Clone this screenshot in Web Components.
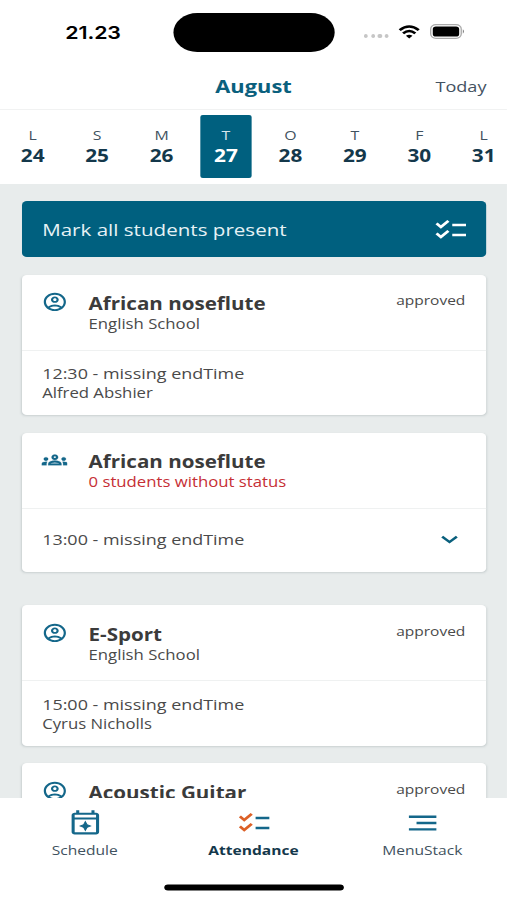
<!DOCTYPE html>
<html lang="en">
<head>
<meta charset="utf-8">
<title>Attendance</title>
<style>
html,body{margin:0;padding:0;background:#fff;overflow:hidden;width:507px;height:900px}
</style>
</head>
<body>
<attendance-app></attendance-app>
<script>
const ICONS = {
  person: '<path d="M12 2C6.48 2 2 6.48 2 12s4.48 10 10 10 10-4.48 10-10S17.52 2 12 2zM7.35 18.5C8.66 17.56 10.26 17 12 17s3.34.56 4.65 1.5c-1.31.94-2.91 1.5-4.65 1.5s-3.34-.56-4.65-1.5zm10.79-1.38a9.947 9.947 0 00-12.28 0A7.957 7.957 0 014 12c0-4.42 3.58-8 8-8s8 3.58 8 8c0 1.95-.7 3.73-1.86 5.12zM12 6c-1.93 0-3.5 1.57-3.5 3.5S10.07 13 12 13s3.5-1.57 3.5-3.5S13.93 6 12 6zm0 5c-.83 0-1.5-.67-1.5-1.5S11.17 8 12 8s1.5.67 1.5 1.5S12.83 11 12 11z"/>',
  group: '<path stroke="currentColor" stroke-width=".2" d="M4 13c1.1 0 2-.9 2-2s-.9-2-2-2-2 .9-2 2 .9 2 2 2zm1.13 1.1c-.37-.06-.74-.1-1.13-.1-.99 0-1.93.21-2.78.58A2.01 2.01 0 000 16.43V18h4.5v-1.61c0-.83.23-1.61.63-2.29zM20 13c1.1 0 2-.9 2-2s-.9-2-2-2-2 .9-2 2 .9 2 2 2zm4 3.43c0-.81-.48-1.53-1.22-1.85A6.95 6.95 0 0020 14c-.39 0-.76.04-1.13.1.4.68.63 1.46.63 2.29V18H24v-1.57zM16.24 13.65c-1.17-.52-2.61-.9-4.24-.9s-3.07.39-4.24.9A2.988 2.988 0 006 16.39V18h12v-1.61c0-1.18-.68-2.26-1.76-2.74zM8.07 16c.09-.23.13-.39.91-.69.97-.38 1.99-.56 3.02-.56s2.05.18 3.02.56c.77.3.81.46.91.69H8.07zM12 8c.55 0 1 .45 1 1s-.45 1-1 1-1-.45-1-1 .45-1 1-1m0-2c-1.66 0-3 1.34-3 3s1.34 3 3 3 3-1.34 3-3-1.34-3-3-3z"/>',
  checklist: '<path d="M22 7h-9v2h9V7zm0 8h-9v2h9v-2z"/><path fill="var(--tick, currentColor)" d="M5.54 11L2 7.46l1.41-1.41 2.12 2.12 4.24-4.24 1.41 1.41L5.54 11zm0 8L2 15.46l1.41-1.41 2.12 2.12 4.24-4.24 1.41 1.41L5.54 19z"/>',
  calendar: '<g transform="translate(.7 .7)"><path fill-rule="evenodd" d="M19 3h-1V1h-2v2H8V1H6v2H5c-1.100 0-2 .9-2 2v13.500c0 1.100.9 2 2 2h14c1.100 0 2-.9 2-2V5c0-1.100-.9-2-2-2zM5 4.600h14v2.200H5zM5 8.400h14v10.300H5z"/><path d="M12 10.200l1.100 2.400 2.300 1.100-2.300 1.100-1.100 2.400-1.100-2.400-2.300-1.100 2.300-1.100z" stroke="currentColor" stroke-width=".7"/></g>',
  menu: '<path d="M3 6h18v1.900H3zM8 11.050h13v1.900H8zM3 16.100h18V18H3z"/>',
  chevron: '<path d="M6 8.600l6 5.400 6-5.400" fill="none" stroke="currentColor" stroke-width="2.300"/>'
};

function define(name, render) {
  customElements.define(name, class extends HTMLElement {
    connectedCallback() {
      if (this.shadowRoot) return;
      this.attachShadow({ mode: 'open' }).innerHTML = render(this);
    }
  });
}

define('ui-icon', el => `
<style>
:host{display:block;flex:none;width:24px;height:24px}
svg{display:block;width:100%;height:100%;fill:currentColor}
</style>
<svg viewBox="0 0 24 24">${ICONS[el.getAttribute('name')]}</svg>`);

define('status-bar', () => `
<style>
:host{display:grid;grid-template-columns:142px 132px 1fr;height:64px;align-items:start;color:#000}
.time{font:600 17.500px/22px Inter,sans-serif;padding:21.600px 0 0 53.500px;letter-spacing:-.1px}
.island{height:38.500px;margin-top:13px;border-radius:20px;background:#000}
.signals{display:flex;align-items:center;height:15px;margin-top:24px;padding-left:24px}
.dots{display:flex;gap:2.400px;padding-top:9.500px;margin-right:8px}
.dots i{width:3.300px;height:4px;border-radius:50%;background:#c6c6c6}
.wifi{width:18px;height:14px;margin-right:7.500px}
.battery{width:29px;height:15px}
</style>
<div class="time">21.23</div>
<div class="island"></div>
<div class="signals">
<div class="dots"><i></i><i></i><i></i><i></i></div>
<svg class="wifi" viewBox="0 0 18 14" fill="none" stroke="#000" stroke-width="2.400"><path d="M1.200 5.200Q9-2.200 16.800 5.200"/><path d="M4 8.300q5-4.600 10 0"/><path d="M6.300 10.800q2.700-2.300 5.400 0L9 13.600z" fill="#000" stroke="none"/></svg>
<svg class="battery" viewBox="0 0 29 15"><rect x=".6" y=".6" width="25" height="13.800" rx="4.300" fill="none" stroke="#aaa" stroke-width="1.100"/><rect x="2.300" y="2.500" width="21.600" height="10" rx="2.600"/><path d="M26.900 5.300q2 2.200 0 4.400z" fill="#888"/></svg>
</div>`);

define('month-header', () => `
<style>
:host{display:grid;grid-template-columns:1fr auto 1fr;align-items:center;height:45px;box-sizing:content-box;border-bottom:1px solid #f1f2f2;padding:0 16.800px}
span{padding-bottom:1.400px}
.month{grid-column:2;font-weight:700;font-size:17.900px;color:#0a607d}
.today{justify-self:end;font-size:14.800px;color:#445261}
</style>
<span class="month"><slot></slot></span><span class="today"><slot name="action"></slot></span>`);

define('day-strip', () => `
<style>
:host{display:flex;height:68.500px;padding-top:5px;overflow:hidden;padding-left:.4px}
</style><slot></slot>`);

define('day-cell', el => `
<style>
:host{display:flex;flex:none;width:52.750px;justify-content:center}
.cell{display:flex;flex-direction:column;align-items:center;width:42.200px;height:63px;box-sizing:border-box;padding-top:10px;border-radius:2px;color:#14384b}
.letter{font-size:13px;line-height:20px;color:#3f5260}
.num{font-weight:700;font-size:17px;line-height:22.800px}
:host([selected]) .cell{background:#00607f;color:#fff}
:host([selected]) .letter{color:#d5e6ec}
</style>
<div class="cell"><span class="letter">${el.getAttribute('letter')}</span><span class="num"><slot></slot></span></div>`);

define('mark-all-button', () => `
<style>
:host{display:flex;align-items:center;justify-content:space-between;height:56.900px;border-radius:4px;background:#00607f;color:#fff;padding:0 14.600px 0 17px;font-size:16.850px}
span{color:#e6f2f5;padding-top:.6px}
ui-icon{width:30px;height:30px;margin-top:2px}
</style>
<span><slot></slot></span><ui-icon name="checklist"></ui-icon>`);

define('lesson-card', el => `
<style>
:host{display:block;border-radius:4px;background:#fff;color:#4a4a4a;box-shadow:0 1px 2px rgba(80,100,105,.2)}
header{display:flex;height:76px;box-sizing:border-box;padding:18.400px 17.300px 0 16.200px;border-bottom:1px solid #eff1f1}
ui-icon{width:21.800px;height:21.800px;margin:-1.800px 17px 0 0;color:#14678a}
.names{flex:1}
.title{font-weight:700;font-size:16.850px;line-height:21px;color:#3b3b3b}
.sub{font-size:13.700px;line-height:20.800px}
:host([alert]) .sub{color:#c62f35}
.status{font-size:12.700px;line-height:18px;margin-top:-1.800px}
.body{display:flex;align-items:center;justify-content:space-between;height:64.600px;box-sizing:border-box;padding:1.400px 17.300px 0 17px}
.time{font-size:14.700px;line-height:19.600px}
.who{font-size:13.700px;line-height:20px}
.body ui-icon{width:24px;height:24px;margin:0;color:#0a607d}
:host([alert]) header{height:76.600px;padding-top:18.600px}
:host([alert]) .body{height:62.400px;padding:0 18px 1.200px 17px}
</style>
<header><ui-icon name="${el.getAttribute('icon')}"></ui-icon>
<div class="names"><div class="title"><slot name="title"></slot></div><div class="sub"><slot name="sub"></slot></div></div>
<div class="status"><slot name="status"></slot></div></header>
<div class="body"><div><div class="time"><slot name="time"></slot></div><div class="who"><slot name="who"></slot></div></div>
${el.hasAttribute('alert') ? '<ui-icon name="chevron"></ui-icon>' : ''}</div>`);

define('lesson-list', () => `
<style>
:host{display:flex;flex-direction:column;gap:17.300px;flex:1;min-height:0;overflow:hidden;background:#e8ecec;padding:17px 16.800px 0 17.500px}
::slotted(*){flex:none}
</style><slot></slot>`);

define('tab-item', el => `
<style>
:host{display:flex;flex-direction:column;align-items:center;width:138.200px;color:#14678a}
ui-icon{width:30px;height:30px}
span{font-size:12.750px;line-height:18px;color:#3f5260;margin-top:3px}
:host([active]){--tick:#dc6128}
:host([active]) span{font-weight:700;color:#14384b}
</style>
<ui-icon name="${el.getAttribute('icon')}"></ui-icon><span><slot></slot></span>`);

define('tab-bar', () => `
<style>
:host{display:flex;flex-direction:column;height:102px;background:#fff}
nav{display:flex;justify-content:center;padding-top:10px;height:78px;box-sizing:border-box}
.home{width:147.500px;height:5.500px;border-radius:3px;background:#000;margin:8px auto 0;transform:translate(.5px,.6px)}
</style>
<nav><slot></slot></nav><div class="home"></div>`);

/* The screen is laid out at 415.06px and widened to fill the 507px window. */
define('attendance-app', () => `
<style>
:host{display:flex;flex-direction:column;width:415.060px;height:900px;overflow:hidden;background:#fff;transform:scaleX(1.2215);transform-origin:0 0;font-family:"Open Sans","Noto Sans",sans-serif}
.gap{margin-top:16.600px}
</style>
<status-bar></status-bar>
<month-header>August<span slot="action">Today</span></month-header>
<day-strip>
<day-cell letter="L">24</day-cell><day-cell letter="S">25</day-cell><day-cell letter="M">26</day-cell><day-cell letter="T" selected>27</day-cell><day-cell letter="O">28</day-cell><day-cell letter="T">29</day-cell><day-cell letter="F">30</day-cell><day-cell letter="L">31</day-cell>
</day-strip>
<lesson-list>
<mark-all-button>Mark all students present</mark-all-button>
<lesson-card icon="person"><span slot="title">African noseflute</span><span slot="sub">English School</span><span slot="status">approved</span><span slot="time">12:30 - missing endTime</span><span slot="who">Alfred Abshier</span></lesson-card>
<lesson-card icon="group" alert><span slot="title">African noseflute</span><span slot="sub">0 students without status</span><span slot="time">13:00 - missing endTime</span></lesson-card>
<lesson-card class="gap" icon="person"><span slot="title">E-Sport</span><span slot="sub">English School</span><span slot="status">approved</span><span slot="time">15:00 - missing endTime</span><span slot="who">Cyrus Nicholls</span></lesson-card>
<lesson-card icon="person"><span slot="title">Acoustic Guitar</span><span slot="status">approved</span></lesson-card>
</lesson-list>
<tab-bar><tab-item icon="calendar">Schedule</tab-item><tab-item icon="checklist" active>Attendance</tab-item><tab-item icon="menu">MenuStack</tab-item></tab-bar>`);
</script>
</body>
</html>
